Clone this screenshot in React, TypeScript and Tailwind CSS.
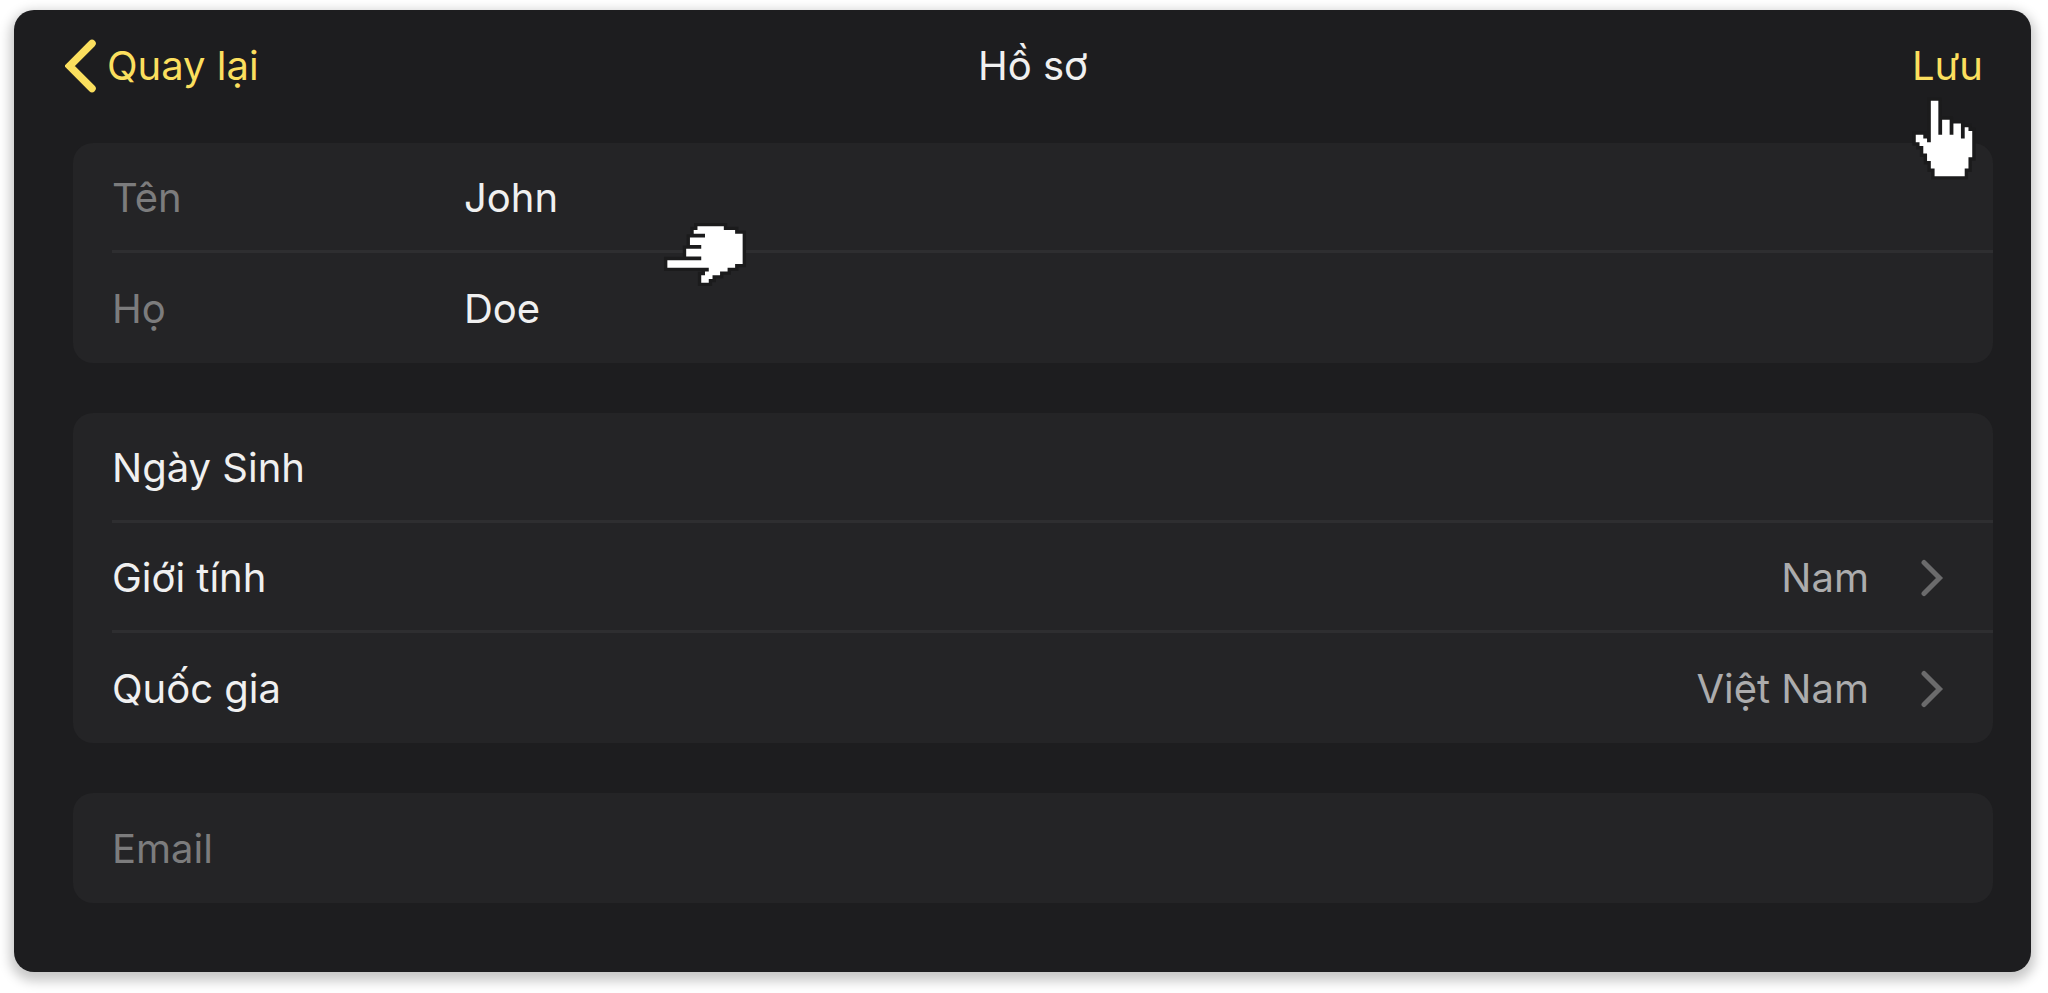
import React from "react";

type IconProps = { className?: string };

const BackIcon = () => (
  <svg viewBox="0 0 32 54" className="h-[54px] w-8" fill="none" aria-hidden="true">
    <path d="M27 4.500 4.500 27 27 49.500" stroke="currentColor" strokeWidth="7.500" strokeLinecap="round" />
  </svg>
);

const RowArrow = () => (
  <svg viewBox="0 0 24 38" className="h-[38px] w-6 text-[#6b6b6c]" fill="none" aria-hidden="true">
    <path d="M3 3.500 18.500 19 3 34.500" stroke="currentColor" strokeWidth="5" strokeLinecap="round" />
  </svg>
);

const Pointer = ({ className = "" }: IconProps) => (
  <svg
    viewBox="-1 -1 17 22"
    className={`pointer-events-none absolute z-10 h-[83px] w-16 ${className}`}
    aria-hidden="true"
  >
    <path
      d="M4 0H6V9H7V5H9V9H10V6H12V10H13V7H14V8H15V15H14V18H13V20H5V18H4V16H3V14H2V12H1V11H0V9H2V10H3V11H4Z"
      fill="#fff"
      stroke="#1b1b1c"
      strokeWidth="1.800"
      paintOrder="stroke"
    />
  </svg>
);

const Group = ({ children }: { children: React.ReactNode }) => (
  <div className="relative rounded-[20px] bg-[#242426] pl-[39px]">{children}</div>
);

const row = "flex h-[110px] w-full items-center border-[#2e2e30] pt-0.5 text-left";

type FieldProps = { id: string; label: string; value: string; line?: boolean };

const Field = ({ id, label, value, line }: FieldProps) => (
  <div className={`${row} ${line ? "border-b-3" : ""}`}>
    <label htmlFor={id} className="w-[352px] text-[#7c7c7d]">
      {label}
    </label>
    <input id={id} defaultValue={value} className="min-w-0 flex-1 bg-transparent outline-none" />
  </div>
);

type LinkRowProps = { label: string; value?: string; line?: boolean };

const LinkRow = ({ label, value, line }: LinkRowProps) => (
  <button type="button" className={`${row} pr-12 ${line ? "border-b-3" : ""}`}>
    <span className="flex-1">{label}</span>
    {value && (
      <>
        <span className="mr-[52px] text-[#acacad]">{value}</span>
        <RowArrow />
      </>
    )}
  </button>
);

const App = () => {
  return (
    <div className="bg-white pt-[10px] pr-[17px] pb-[21px] pl-[14px] font-['Inter',sans-serif] text-[40px] leading-[50px] text-[#f0f0f0]">
      <main className="rounded-[20px] bg-[#1d1d1f] pr-[38px] pb-[69px] pl-[59px] shadow-[0_5px_12px_4px_rgba(0,0,0,0.22)]">
        <header className="mb-[23px] grid h-[110px] grid-cols-3 items-center pt-0.5 text-[#fbdf5e]">
          <button type="button" className="-ml-2 flex items-center gap-2.5 justify-self-start">
            <BackIcon />
            Quay lại
          </button>
          <h1 className="justify-self-center text-[#f0f0f0]">Hồ sơ</h1>
          <div className="relative mr-2.5 justify-self-end">
            <button type="button">Lưu</button>
            <Pointer className="top-14 right-[7px]" />
          </div>
        </header>

        <form className="flex flex-col gap-[50px]">
          <Group>
            <Field id="first-name" label="Tên" value="John" line />
            <Field id="last-name" label="Họ" value="Doe" />
            <Pointer className="top-[70px] left-[600px] -rotate-90" />
          </Group>
          <Group>
            <LinkRow label="Ngày Sinh" line />
            <LinkRow label="Giới tính" value="Nam" line />
            <LinkRow label="Quốc gia" value="Việt Nam" />
          </Group>
          <Group>
            <div className={row}>
              <input
                type="email"
                aria-label="Email"
                placeholder="Email"
                className="w-full bg-transparent outline-none placeholder:text-[#7c7c7d]"
              />
            </div>
          </Group>
        </form>
      </main>
    </div>
  );
};

export default App;
